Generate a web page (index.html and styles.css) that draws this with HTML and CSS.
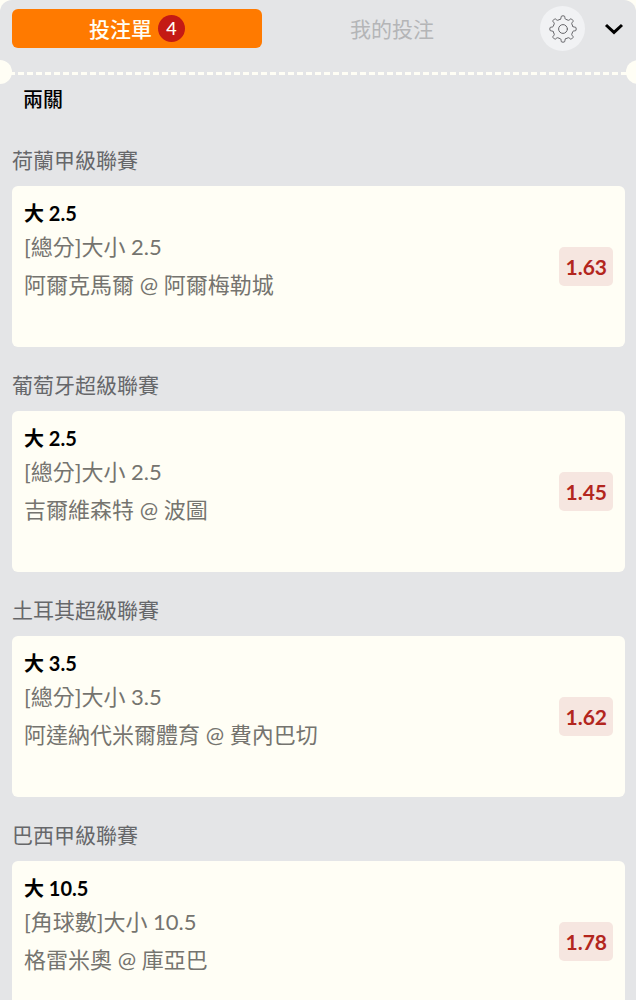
FILE: index.html
```html
<!DOCTYPE html>
<html lang="zh-Hant">
<head>
    <meta charset="UTF-8">
    <meta name="viewport" content="width=device-width, initial-scale=1.0">
    <title>投注單</title>
    <link rel="stylesheet" href="styles.css">
</head>
<body>
    <div class="betslip">
        <header class="topbar">
            <button type="button" class="tab active">投注單 <span class="count">4</span></button>
            <button type="button" class="tab">我的投注</button>
            <div class="actions">
                <button type="button" class="settings" aria-label="設定">
                    <svg width="28" height="28" viewBox="-14 -14 28 28" fill="none" stroke="#66666a" stroke-width="1" stroke-linejoin="round" stroke-linecap="round">
                        <circle r="4.4"/>
                        <path id="teeth" d="M-2.4 -9.9 C-1.4 -10.6 -2.4 -13.1 -1 -13.1 L1 -13.1 C2.4 -13.1 1.4 -10.6 2.4 -9.9 L5.3 -8.7 C6.5 -8.5 7.6 -11 8.5 -10 L10 -8.5 C11 -7.6 8.5 -6.5 8.7 -5.3 L9.9 -2.4"/>
                        <use href="#teeth" transform="rotate(90)"/>
                        <use href="#teeth" transform="rotate(180)"/>
                        <use href="#teeth" transform="rotate(270)"/>
                    </svg>
                </button>
                <button type="button" class="collapse" aria-label="收起">
                    <svg width="20" height="12" viewBox="0 0 20 12" fill="none" stroke="#000" stroke-width="3">
                        <path d="M2 2 L10 9.4 L18 2"/>
                    </svg>
                </button>
            </div>
        </header>

        <div class="tear"></div>

        <main class="content">
            <h1>兩關</h1>

            <section>
                <h2>荷蘭甲級聯賽</h2>
                <div class="card">
                    <div class="info">
                        <h3>大 2.5</h3>
                        <p class="market">[總分]大小 2.5</p>
                        <p class="teams">阿爾克馬爾 @ 阿爾梅勒城</p>
                    </div>
                    <span class="odds">1.63</span>
                </div>
            </section>

            <section>
                <h2>葡萄牙超級聯賽</h2>
                <div class="card">
                    <div class="info">
                        <h3>大 2.5</h3>
                        <p class="market">[總分]大小 2.5</p>
                        <p class="teams">吉爾維森特 @ 波圖</p>
                    </div>
                    <span class="odds">1.45</span>
                </div>
            </section>

            <section>
                <h2>土耳其超級聯賽</h2>
                <div class="card">
                    <div class="info">
                        <h3>大 3.5</h3>
                        <p class="market">[總分]大小 3.5</p>
                        <p class="teams">阿達納代米爾體育 @ 費內巴切</p>
                    </div>
                    <span class="odds">1.62</span>
                </div>
            </section>

            <section>
                <h2>巴西甲級聯賽</h2>
                <div class="card">
                    <div class="info">
                        <h3>大 10.5</h3>
                        <p class="market">[角球數]大小 10.5</p>
                        <p class="teams">格雷米奧 @ 庫亞巴</p>
                    </div>
                    <span class="odds">1.78</span>
                </div>
            </section>
        </main>
    </div>
</body>
</html>
```
FILE: styles.css
```css
* {
    box-sizing: border-box;
}
body {
    margin: 0;
    background-color: #fffef5;
    font-family: Lato, "Noto Sans CJK TC", sans-serif;
    font-size: 21px;
    color: #000;
}
h1, h2, h3, p {
    margin: 0;
}
button {
    padding: 0;
    border: none;
    background: none;
    font: inherit;
    cursor: pointer;
}
.betslip {
    min-height: 100vh;
    background-color: #e4e5e7;
    border-radius: 12px 12px 0 0;
    overflow: hidden;
}
.topbar {
    display: flex;
    align-items: center;
    gap: 5px;
    height: 57px;
    padding: 0 12px;
}
.tab {
    flex: 1;
    display: flex;
    align-items: center;
    justify-content: center;
    gap: 6px;
    height: 39px;
    padding-bottom: 2px;
    border-radius: 6px;
    color: #b4b5b7;
}
.tab.active {
    padding-bottom: 0;
    background-color: #ff7a00;
    color: #fffef5;
    font-weight: 500;
    line-height: 28px;
}
.count {
    width: 27px;
    height: 27px;
    border-radius: 50%;
    background-color: #c41a14;
    font-size: 18px;
    line-height: 27px;
}
.actions {
    display: flex;
    align-items: center;
    gap: 19px;
    margin-left: 18px;
}
.settings {
    display: flex;
    align-items: center;
    justify-content: center;
    width: 45px;
    height: 45px;
    border-radius: 50%;
    background-color: #f1f2f4;
}
.collapse {
    display: flex;
}

/* ticket tear line with a notch on each side */
.tear {
    position: relative;
    height: 3px;
    margin-top: 15px;
    background: repeating-linear-gradient(to right, #fffef5 0, #fffef5 6px, transparent 6px, transparent 9px);
}
.tear::before,
.tear::after {
    content: "";
    position: absolute;
    top: -12px;
    width: 24px;
    height: 24px;
    border-radius: 50%;
    background-color: #fffef5;
}
.tear::before {
    left: -12px;
}
.tear::after {
    right: -14px;
}

.content {
    padding: 8px 11px 0 12px;
}
h1 {
    padding-left: 11px;
    font-size: 20px;
    font-weight: 500;
    line-height: 32px;
}
section {
    padding-top: 22px;
}
h1 + section {
    padding-top: 29px;
}
h2 {
    margin-bottom: 10px;
    color: #66676a;
    font-size: 21px;
    font-weight: 400;
    line-height: 32px;
}
.card {
    display: flex;
    align-items: center;
    justify-content: space-between;
    min-height: 161px;
    padding: 11px 12px;
    border-radius: 6px;
    background-color: #fffef5;
}
.info {
    align-self: flex-start;
}
h3 {
    font-size: 20px;
    font-weight: 700;
    line-height: 32px;
}
.market,
.teams {
    color: #75746f;
    font-size: 22px;
    font-weight: 400;
    line-height: 36px;
}
.teams {
    margin-top: 2px;
}
.odds {
    padding: 0 6px;
    border-radius: 5px;
    background-color: #f6e6e0;
    color: #b3261e;
    font-size: 21px;
    font-weight: 700;
    line-height: 39px;
}
```
